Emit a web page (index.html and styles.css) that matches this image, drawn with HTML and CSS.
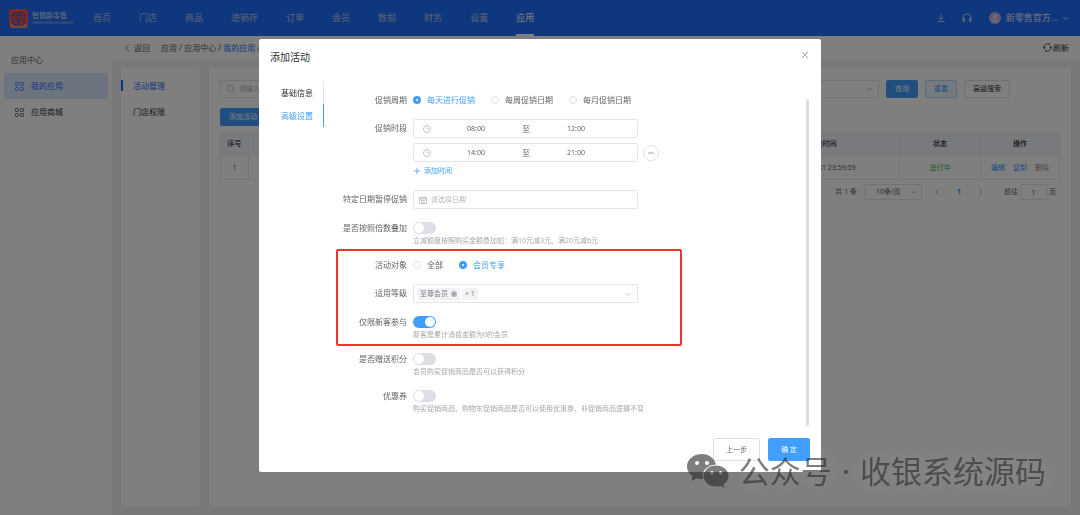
FILE: index.html
```html
<!DOCTYPE html>
<html lang="zh-CN">
<head>
<meta charset="utf-8">
<title>添加活动</title>
<link rel="stylesheet" href="styles.css">
</head>
<body>
<div class="app">
  <header class="topbar">
    <svg class="logo" viewBox="0 0 19 19" aria-hidden="true"><rect width="19" height="19" rx="3" fill="#f4524f"/><path d="M1 14q9 5 17 0v2q0 3-3 3H4q-3 0-3-3z" fill="#f58a6c"/><g fill="none" stroke="#2a60c8" stroke-width="1.1" stroke-linecap="round"><path d="M5 3.500h9M3 8V6h13v2M9.500 3.500v6M5.500 8.500h2M11.500 8.500h2M4 11h11M9.500 11v4q0 2-3 1M3 13q2 4 6 3M16 13q-1 3-4 3"/></g></svg>
    <div class="brand"><strong>智慧新零售</strong><small>ZHIHUIXINLINGSHOU</small></div>
    <nav class="mainnav">
      <a href="#">首页</a><a href="#">门店</a><a href="#">商品</a><a href="#">进销存</a><a href="#">订单</a><a href="#">会员</a><a href="#">数据</a><a href="#">财务</a><a href="#">设置</a><a href="#" class="current">应用</a>
    </nav>
    <div class="tools">
      <button aria-label="下载"><svg class="i8" viewBox="0 0 8 8"><path d="M4 .5v5M2 3.500l2 2 2-2M.5 7.500h7"/></svg></button>
      <button aria-label="客服"><svg class="i10" viewBox="0 0 10 10"><path d="M1 6V5a4 4 0 0 1 8 0v1M1 5.500h1.500v3H1zM7.500 5.500H9v3H7.500z"/></svg></button>
      <button class="account"><svg class="avatar" viewBox="0 0 12 12"><circle cx="6" cy="6" r="6" fill="#b9b4e6"/><circle cx="6" cy="4.500" r="2" fill="#e9dcee"/><path d="M2.500 9q3.500-4 7 0-3.500 3-7 0z" fill="#e4cfe0"/></svg>新零售官方...<svg class="i6" viewBox="0 0 6 6"><path d="M.5 2 3 4.500 5.500 2"/></svg></button>
    </div>
  </header>
  <div class="body">
    <aside class="sidebar">
      <h2>应用中心</h2>
      <a href="#" class="active"><svg class="i9" viewBox="0 0 9 9"><rect x=".5" y=".5" width="3" height="3" rx="1"/><rect x="5.500" y=".5" width="3" height="3" rx="1"/><rect x=".5" y="5.500" width="3" height="3" rx="1"/><rect x="5.500" y="5.500" width="3" height="3" rx="1"/></svg>我的应用</a>
      <a href="#"><svg class="i9" viewBox="0 0 9 9"><rect x=".5" y=".5" width="3" height="3" rx="1"/><rect x="5.500" y=".5" width="3" height="3" rx="1"/><rect x=".5" y="5.500" width="3" height="3" rx="1"/><rect x="5.500" y="5.500" width="3" height="3" rx="1"/></svg>应用商城</a>
    </aside>
    <main class="main">
      <div class="crumbs">
        <a href="#" class="back"><svg class="i8" viewBox="0 0 8 8"><path d="M6 .5 2.500 4 6 7.500"/></svg>返回</a>
        <span>应用 / 应用中心 / <a href="#" class="here">我的应用</a> /</span>
        <button class="refresh"><svg class="i9" viewBox="0 0 9 9"><path d="M1 5.500A3.600 3.600 0 0 1 6.500 1.500M8 3.500A3.600 3.600 0 0 1 2.500 7.500M.5 3.500 1 5.500l1.500-1M8.500 5.500 8 3.500l-1.500 1M2.500 7.500v1.200M6.500 1.500V.3"/></svg>刷新</button>
      </div>
      <div class="content">
        <nav class="subnav"><a href="#" class="active">活动管理</a><a href="#">门店权限</a></nav>
        <section class="panel">
          <div class="filters">
            <label class="field search"><svg class="i8" viewBox="0 0 8 8"><circle cx="3.500" cy="3.500" r="3"/><path d="m5.800 5.800 1.700 1.700"/></svg><input type="text" placeholder="请输入" aria-label="搜索"></label>
            <button class="field dropdown" aria-label="筛选"><svg class="i6" viewBox="0 0 6 6"><path d="M.5 2 3 4.500 5.500 2"/></svg></button>
            <button class="btn primary">查询</button><button class="btn soft">重置</button><button class="btn">高级搜索</button>
          </div>
          <button class="btn primary add">添加活动</button>
          <table>
            <colgroup><col class="c-index"><col><col class="c-time"><col class="c-state"><col class="c-act"></colgroup>
            <thead><tr><th>序号</th><th></th><th>结束时间</th><th>状态</th><th>操作</th></tr></thead>
            <tbody><tr><td>1</td><td></td><td>2023-12-31 23:59:59</td><td class="ok">进行中</td><td><div class="actions"><a href="#">编辑</a><a href="#">复制</a><a href="#" class="muted">删除</a></div></td></tr></tbody>
          </table>
          <div class="pager">
            <span>共 1 条</span>
            <button class="field size">10条/页<svg class="i6" viewBox="0 0 6 6"><path d="M.5 2 3 4.500 5.500 2"/></svg></button>
            <button class="page" aria-label="上一页"><svg class="i6" viewBox="0 0 6 6"><path d="M4.500.5 2 3l2.500 2.500"/></svg></button>
            <button class="page on">1</button>
            <button class="page" aria-label="下一页"><svg class="i6" viewBox="0 0 6 6"><path d="M1.500.5 4 3 1.500 5.500"/></svg></button>
            <label class="jump">前往<input class="field" type="text" value="1">页</label>
          </div>
        </section>
      </div>
    </main>
  </div>
</div>

<div class="overlay">
  <div class="dialog" role="dialog" aria-labelledby="dlg-title">
    <div class="dialog-head"><h1 id="dlg-title">添加活动</h1><button class="close" aria-label="关闭"><svg class="i8" viewBox="0 0 8 8"><path d="m1 1 6 6M7 1 1 7"/></svg></button></div>
    <div class="dialog-body">
      <nav class="tabs"><a href="#">基础信息</a><a href="#" class="active">高级设置</a></nav>
      <form class="form">
        <div class="row"><span class="label">促销周期</span>
          <div class="radios"><label class="checked"><input type="radio" name="cycle" checked>每天进行促销</label><label><input type="radio" name="cycle">每周促销日期</label><label><input type="radio" name="cycle">每月促销日期</label></div></div>
        <div class="row"><span class="label">促销时段</span>
          <div class="stack">
            <div class="field range"><svg class="i8" viewBox="0 0 8 8"><circle cx="4" cy="4" r="3.500"/><path d="M4 1.800V4h2"/></svg><input type="text" value="08:00" aria-label="开始时间"><span>至</span><input type="text" value="12:00" aria-label="结束时间"></div>
            <div class="range-line"><div class="field range"><svg class="i8" viewBox="0 0 8 8"><circle cx="4" cy="4" r="3.500"/><path d="M4 1.800V4h2"/></svg><input type="text" value="14:00" aria-label="开始时间"><span>至</span><input type="text" value="21:00" aria-label="结束时间"></div><button type="button" class="remove" aria-label="删除时段"><svg class="i6" viewBox="0 0 6 6"><path d="M0 3h6"/></svg></button></div>
            <button type="button" class="addtime"><svg class="i6" viewBox="0 0 6 6"><path d="M0 3h6M3 0v6"/></svg>添加时间</button>
          </div></div>
        <div class="row"><label class="label" for="pause">特定日期暂停促销</label>
          <div class="field date"><svg class="i8" viewBox="0 0 8 8"><path d="M.5 1.500h7v6h-7zM.5 3h7M2.500.5v1.500M5.500.5v1.500M2 4.500h4M2 6h4"/></svg><input id="pause" type="text" placeholder="请选择日期"></div></div>
        <div class="row hinted"><label class="label" for="multi">是否按照倍数叠加</label>
          <div><span class="switch"><input type="checkbox" role="switch" id="multi"></span><p class="hint">立减额度按照购买金额叠加如：满10元减3元、满20元减6元</p></div></div>
        <div class="marked">
          <div class="row"><span class="label">活动对象</span>
            <div class="radios"><label><input type="radio" name="who">全部</label><label class="checked"><input type="radio" name="who" checked>会员专享</label></div></div>
          <div class="row"><span class="label">适用等级</span>
            <div class="field levels"><span class="tag">至尊会员<button type="button" aria-label="移除"><svg class="i6" viewBox="0 0 6 6"><circle cx="3" cy="3" r="3" fill="#b4b7be" stroke="none"/><path d="m2 2 2 2M4 2 2 4" stroke="#8d9096"/></svg></button></span><span class="tag">+ 1</span><svg class="i6 arrow" viewBox="0 0 6 6"><path d="M0 1.500l3 3 3-3"/></svg></div></div>
          <div class="row hinted"><label class="label" for="newonly">仅限新客参与</label>
            <div><span class="switch"><input type="checkbox" role="switch" id="newonly" checked></span><p class="hint">新客是累计消费金额为0的会员</p></div></div>
        </div>
        <div class="row hinted"><label class="label" for="points">是否赠送积分</label>
          <div><span class="switch"><input type="checkbox" role="switch" id="points"></span><p class="hint">会员购买促销商品是否可以获得积分</p></div></div>
        <div class="row hinted"><label class="label" for="coupon">优惠券</label>
          <div><span class="switch"><input type="checkbox" role="switch" id="coupon"></span><p class="hint">购买促销商品、购物车促销商品是否可以使用优惠券、非促销商品逻辑不变</p></div></div>
      </form>
      <div class="scrollbar"></div>
    </div>
    <div class="dialog-foot"><button class="btn">上一步</button><button class="btn primary">确 定</button></div>
  </div>
</div>

<div class="watermark">
  <svg viewBox="0 0 42 35" aria-hidden="true"><path fill-rule="evenodd" d="M15 0C6.500 0 0 5.500 0 12.500c0 4 2 7.500 5.500 9.700L4.500 27l5-2.700c2 .6 4 .8 6.500.7C14 17 20 11 29 10.500 27.500 4.500 22 0 15 0zM10 7a2 2 0 1 1 0 4 2 2 0 0 1 0-4zm10 0a2 2 0 1 1 0 4 2 2 0 0 1 0-4z"/><path fill-rule="evenodd" d="M29 11.500c-7 0-12.500 4.700-12.500 10.500S22 32.500 29 32.500c1.500 0 3-.2 4.500-.6l4 2.100-1-3.500c3.200-2 5-5 5-8.500 0-5.800-5.500-10.500-12.500-10.500zM25 17a1.700 1.700 0 1 1 0 3.400 1.700 1.700 0 0 1 0-3.400zm8.500 0a1.700 1.700 0 1 1 0 3.400 1.700 1.700 0 0 1 0-3.400z"/></svg>
  <span>公众号</span><span>·</span><span>收银系统源码</span>
</div>
</body>
</html>
```
FILE: styles.css
```css
*, ::before, ::after { box-sizing: border-box; }
body {
  margin: 0;
  font: 8px/12px "Noto Sans", "Noto Sans CJK SC", sans-serif;
  color: #303133;
  overflow: hidden;
}
a { color: inherit; text-decoration: none; }
button, input { font: inherit; color: inherit; padding: 0; margin: 0; border: 0; background: none; }
input { min-width: 0; outline: 0; }
h1, h2, p { margin: 0; font-weight: 400; }
svg { flex: none; fill: none; stroke: currentColor; stroke-width: 0.8; }
.i6 { width: 6px; height: 6px; }
.i8 { width: 8px; height: 8px; }
.i9 { width: 9px; height: 9px; }
.i10 { width: 10px; height: 10px; }

.app { display: flex; flex-direction: column; min-height: 100vh; }

/* top bar */
.topbar { display: flex; align-items: center; height: 36px; padding: 0 11px 0 9px; background: #1f6efc; color: #e4e9f2; }
.logo { width: 19px; height: 19px; stroke: none; margin-right: 4px; }
.brand { display: flex; flex-direction: column; width: 61px; opacity: 0.7; }
.brand strong { font-size: 7px; line-height: 9px; }
.brand small { font: 4px/5px "Liberation Sans", sans-serif; }
.mainnav { display: flex; gap: 28px; align-self: stretch; font-size: 9px; }
.mainnav a { display: flex; align-items: center; color: #b4c6ea; border-bottom: 2px solid transparent; border-top: 2px solid transparent; }
.mainnav .current { color: #fff; border-bottom-color: #fff; }
.tools { display: flex; align-items: center; gap: 17px; margin-left: auto; }
.tools button { display: flex; align-items: center; }
.tools .account { gap: 5px; font-size: 9px; }
.avatar { width: 12px; height: 12px; stroke: none; }

/* page frame */
.body { display: flex; flex: 1; }
.sidebar { width: 112px; padding: 18px 4px 0; background: #fff; }
.sidebar h2 { font-size: 8px; line-height: 12px; padding-left: 7px; margin-bottom: 7px; color: #606266; }
.sidebar a { display: flex; align-items: center; gap: 7px; height: 26px; padding-left: 11px; border-radius: 2px; }
.sidebar .active { background: #dbe7ff; color: #1f6efc; }
.main { flex: 1; display: flex; flex-direction: column; background: #f2f3f5; min-width: 0; }
.crumbs { display: flex; align-items: center; height: 23px; padding: 0 11px; background: #fff; gap: 11px; color: #606266; }
.back { display: flex; align-items: center; gap: 3px; }
.here { color: #1f6efc; }
.refresh { display: flex; align-items: center; gap: 1px; margin-left: auto; color: #303133; }
.content { display: flex; flex: 1; gap: 9px; padding: 9px; }
.subnav { width: 79px; padding-top: 5px; background: #fff; border-radius: 4px; }
.subnav a { display: flex; align-items: center; height: 26px; position: relative; padding-left: 12px; }
.subnav .active { color: #1f6efc; }
.subnav .active::before { content: ""; position: absolute; left: 0; top: 7px; width: 2px; height: 11px; background: #1f6efc; }
.panel { flex: 1; min-width: 0; padding: 12px 11px; background: #fff; border-radius: 4px; font-size: 7px; }

/* shared controls */
.field { display: flex; align-items: center; height: 19px; border: 1px solid #e1e4ea; border-radius: 2px; background: #fff; }
.field svg { color: #b4b8c0; }
.field input::placeholder { color: #b4b8c0; opacity: 1; }
.btn { height: 18px; padding: 0 8px; border: 1px solid #dcdfe6; border-radius: 2px; background: #fff; font-size: 7px; line-height: 12px; white-space: nowrap; }
.btn.primary { background: #409eff; border-color: #409eff; color: #fff; }
.btn.soft { background: #ecf5ff; border-color: #b3d8ff; color: #409eff; }

/* activity list */
.filters { display: flex; gap: 7px; padding-right: 50px; }
.filters .field { height: 18px; }
.filters .search { width: 120px; padding-left: 6px; gap: 4px; }
.search input { flex: 1; }
.dropdown { flex: 1; justify-content: flex-end; padding-right: 6px; }
.add { margin: 10px 0 6px; display: block; }
table { width: 100%; table-layout: fixed; border-collapse: collapse; }
th, td { height: 24px; padding: 0; border: 1px solid #ebeef5; text-align: center; font-weight: 400; color: #606266; }
th { height: 23px; background: #f0f4fb; color: #303133; font-weight: 500; }
.c-index { width: 28px; }
.c-time { width: 154px; }
.c-state { width: 81px; }
.c-act { width: 79px; }
td.ok { color: #19be4b; }
.actions { display: flex; justify-content: center; gap: 8px; color: #409eff; }
.actions .muted { color: #909399; }
.pager { display: flex; align-items: center; justify-content: flex-end; gap: 8px; margin-top: 4px; padding-right: 4px; color: #606266; }
.pager .field { height: 16px; }
.pager .size { width: 57px; justify-content: space-between; padding: 0 4px 0 10px; }
.page { width: 14px; display: flex; justify-content: center; color: #909399; }
.page.on { color: #409eff; font-weight: 700; }
.jump { display: flex; align-items: center; gap: 2px; margin-left: 8px; }
.jump input { width: 27px; text-align: center; }

/* dialog */
.overlay { position: fixed; inset: 0; display: flex; justify-content: center; align-items: flex-start; padding-top: 39px; background: rgba(0, 0, 0, 0.5); }
.dialog { width: 562px; background: #fff; border-radius: 2px; color: #606266; }
.dialog-head { display: flex; justify-content: space-between; align-items: center; padding: 10px 12px 0 11px; color: #303133; }
.dialog-head h1 { font-size: 10px; line-height: 16px; }
.close { display: flex; color: #909399; margin-bottom: 4px; }
.dialog-body { display: flex; align-items: flex-start; padding: 16px 12px 0 0; }
.tabs { display: flex; flex-direction: column; width: 65px; margin-right: 12px; flex: none; }
.tabs a { height: 23px; line-height: 23px; padding-right: 10px; text-align: right; border-right: 1px solid #dfe3ea; color: #303133; }
.tabs .active { color: #409eff; border-color: #409eff; }
.form { flex: 1; display: flex; flex-direction: column; gap: 10px; padding: 10px 0 12px; }
.row { display: grid; grid-template-columns: 71px minmax(0, 1fr); column-gap: 6px; }
.label { line-height: 18px; text-align: right; white-space: nowrap; }
.hinted { padding-bottom: 2px; }
.hint { font-size: 7px; line-height: 7px; color: #a3a7af; white-space: nowrap; }
.radios { display: flex; align-items: center; height: 18px; gap: 16px; }
.radios label { display: flex; align-items: center; gap: 6px; }
.radios .checked { color: #409eff; }
.radios input { appearance: none; width: 8px; height: 8px; border: 1px solid #dcdfe6; border-radius: 50%; background: #fff; }
.radios input:checked { border: 3px solid #409eff; }
.stack { display: flex; flex-direction: column; align-items: flex-start; gap: 5px; padding-bottom: 5px; }
.form .field { width: 225px; }
.range { padding: 0 16px 0 9px; font-size: 7px; }
.range input { flex: 1; width: 0; text-align: center; }
.range span { width: 10px; text-align: center; font-size: 8px; }
.range-line { display: flex; align-items: center; gap: 5px; }
.remove { display: flex; align-items: center; justify-content: center; width: 16px; height: 16px; border: 1px solid #dcdfe6; border-radius: 50%; color: #909399; }
.addtime { display: flex; align-items: center; gap: 4px; padding-left: 1px; color: #409eff; font-size: 7px; line-height: 8px; }
.date { padding-left: 5px; gap: 4px; }
.date input { flex: 1; font-size: 7px; }
.switch { display: flex; align-items: center; height: 18px; }
.switch input { appearance: none; display: flex; width: 23px; height: 12px; padding: 1px; border-radius: 6px; background: #dcdfe6; }
.switch input::before { content: ""; width: 10px; height: 10px; border-radius: 50%; background: #fff; }
.switch input:checked { justify-content: flex-end; background: #409eff; }
.levels { padding: 0 6px 0 3px; gap: 2px; }
.tag { display: flex; align-items: center; gap: 3px; height: 12px; padding: 0 3px; border-radius: 2px; background: #f2f3f5; font-size: 7px; color: #7d8087; white-space: pre; }
.tag button { display: flex; }
.arrow { margin-left: auto; }
.marked { position: relative; display: flex; flex-direction: column; gap: 10px; }
.marked::after { content: ""; position: absolute; left: 0; top: -7px; bottom: -6px; width: 346px; border: 2px solid #f5322d; border-radius: 2px; pointer-events: none; }
.scrollbar { align-self: stretch; flex: none; width: 3px; margin: 18px 0 0; border-radius: 2px; background: #dcdee2; }
.dialog-foot { display: flex; justify-content: flex-end; gap: 8px; padding: 12px 11px 11px; }
.dialog-foot .btn { height: 23px; padding: 0 12px; }

/* account mark in the corner */
.watermark { position: fixed; right: 34px; bottom: 24px; display: flex; align-items: center; gap: 10px; font-size: 31px; line-height: 40px; color: rgba(40, 40, 40, 0.6); white-space: nowrap; pointer-events: none; }
.watermark svg { width: 42px; height: 35px; fill: currentColor; stroke: none; }
.watermark span { font-weight: 400; text-shadow: 0 0 16px rgba(255, 255, 255, 0.15); }
```
